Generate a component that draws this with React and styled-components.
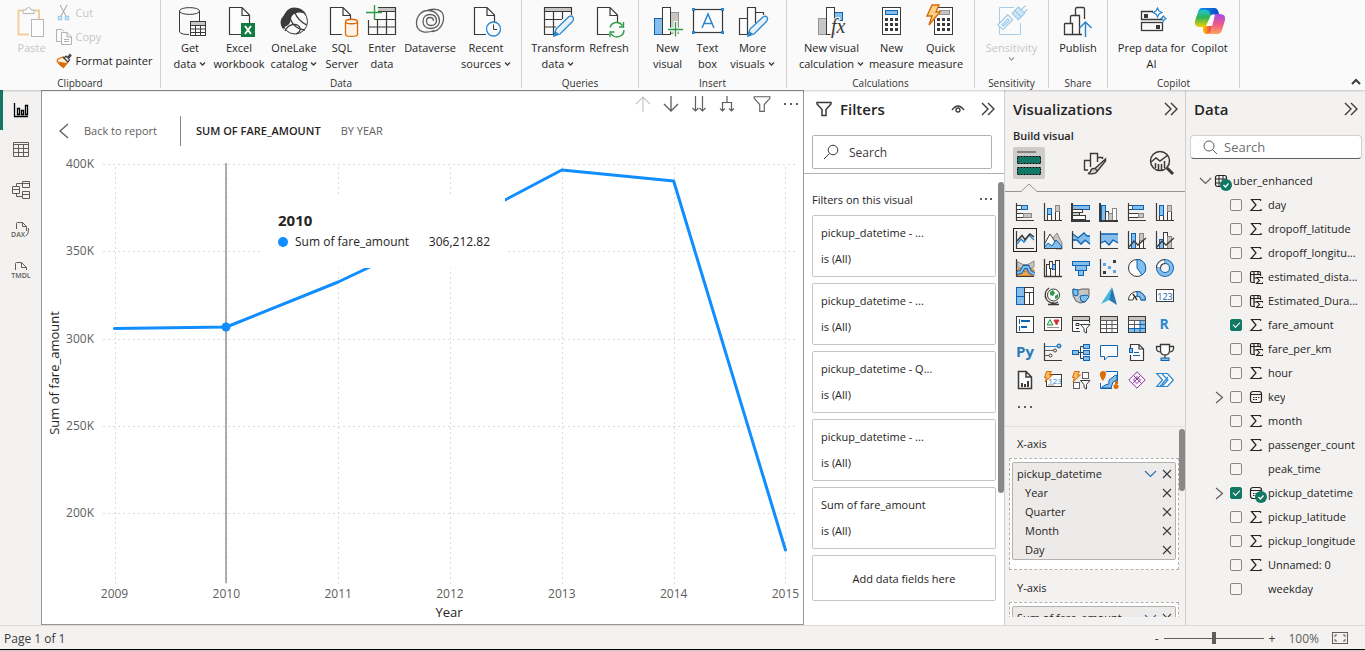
import React from "react";
import styled, { createGlobalStyle } from "styled-components";

const K = "#3b3a39";
const B = "#83beec";
const S = "#0f63b0";
const G = "#c8c6c4";
const W = "#fdfdfd";
const LIGHT = "#605e5c";
const GREEN = "#117865";
const ORANGE = "#d86c0a";

const Global = createGlobalStyle`
  *, *::before, *::after { box-sizing: border-box; }
  body { margin: 0; font-family: "Open Sans", "Noto Sans", sans-serif; font-size: 11px; color: #252423; background: #f3f2f1; }
  button, input { font: inherit; color: inherit; }
  button { background: none; border: 0; padding: 0; cursor: pointer; }
  h2, h3, p, ul { margin: 0; padding: 0; font: inherit; }
  ul { list-style: none; }
  svg { display: block; flex: none; overflow: visible; }
`;

const Shell = styled.div`
  display: flex;
  flex-direction: column;
  height: 100vh;
  min-height: 480px;
  overflow: hidden;
  padding-bottom: 1px;
  background: #cfc4c6;
`;

/* ---------- ribbon ---------- */
const Ribbon = styled.header`
  display: flex;
  flex: none;
  height: 90px;
  background: #fafafa;
  position: relative;
  z-index: 2;
  box-shadow: 0 1px 2px rgba(0, 0, 0, 0.2);
`;
const Group = styled.section`
  display: flex;
  flex-direction: column;
  flex: none;
  width: ${(p) => p.$w}px;
  margin-bottom: 2px;
  border-right: 1px solid #d2d0ce;
`;
const GroupBody = styled.div`
  display: flex;
  flex: 1;
  justify-content: center;
  padding-top: 5px;
`;
const GroupName = styled.h3`
  font-size: 10px;
  line-height: 15px;
  height: 12px;
  text-align: center;
  color: #323130;
`;
const BigButton = styled.button`
  display: flex;
  flex-direction: column;
  align-items: center;
  flex: none;
  width: ${(p) => p.$w}px;
  height: 70px;
  gap: 3px;
  line-height: 16px;
  white-space: nowrap;
  color: #252423;
  &:disabled { color: #c8c6c4; }
`;
const Lines = styled.span`
  display: flex;
  flex-direction: column;
  align-items: center;
`;
const Line = styled.span`
  display: flex;
  align-items: center;
  gap: 3px;
`;
const ClipStack = styled.div`
  display: flex;
  flex-direction: column;
  gap: 8px;
`;
const SmallButton = styled.button`
  display: flex;
  align-items: center;
  gap: 4px;
  height: 16px;
  line-height: 16px;
  white-space: nowrap;
  &:disabled { color: #c8c6c4; }
`;
const Collapse = styled.button`
  align-self: flex-end;
  margin: 0 4px 4px auto;
`;

/* ---------- body ---------- */
const Body = styled.div`
  display: grid;
  grid-template-columns: 41px minmax(0, 1fr) 201px 181px 179px;
  grid-template-rows: minmax(0, 1fr);
  flex: 1;
  min-height: 0;
`;
const Rail = styled.nav`
  display: flex;
  flex-direction: column;
  background: #f3f2f1;
`;
const RailButton = styled.button`
  display: flex;
  align-items: center;
  justify-content: center;
  height: 40px;
  border-left: 3px solid ${(p) => (p.$on ? GREEN : "transparent")};
  padding-right: 2px;
`;
const Canvas = styled.main`
  position: relative;
  display: flex;
  flex-direction: column;
  min-height: 0;
  background: #fff;
  border: 1px solid #979593;
`;
const ChartTools = styled.div`
  display: flex;
  align-items: center;
  justify-content: flex-end;
  flex: none;
  height: 26px;
  padding-right: 4px;
`;
const ToolButton = styled.button`
  display: flex;
  justify-content: center;
  width: ${(p) => p.$w || 28}px;
`;
const Crumbs = styled.div`
  display: flex;
  align-items: center;
  flex: none;
  height: 27px;
  margin-bottom: 8px;
  padding-left: 16px;
`;
const Back = styled.button`
  display: flex;
  align-items: center;
  gap: 15px;
  width: 122px;
  color: ${LIGHT};
`;
const Rule = styled.span`
  width: 1px;
  height: 30px;
  margin-right: 15px;
  background: #8a8886;
`;
const Crumb = styled.span`
  margin-right: 20px;
  font-weight: ${(p) => (p.$strong ? 600 : 400)};
  color: ${(p) => (p.$strong ? "#252423" : "#605e5c")};
`;
const Plot = styled.svg`
  flex: 1;
  width: 100%;
  min-height: 0;
  font-size: 12px;
`;
const Tip = styled.div`
  position: absolute;
  left: 220px;
  top: 104px;
  width: 243px;
  height: 73px;
  padding: 15px 15px 0 16px;
  background: #fff;
`;
const TipTitle = styled.p`
  font-size: 15px;
  font-weight: 700;
  line-height: 20px;
`;
const TipRow = styled.p`
  display: flex;
  align-items: center;
  gap: 7px;
  font-size: 12px;
  line-height: 24px;
  white-space: nowrap;
`;
const Dot = styled.i`
  width: 10px;
  height: 10px;
  border-radius: 50%;
  background: #118dff;
`;
const TipValue = styled.span`
  margin-left: auto;
`;

/* ---------- panes ---------- */
const Pane = styled.aside`
  position: relative;
  display: flex;
  flex-direction: column;
  min-width: 0;
  min-height: 0;
  overflow: hidden;
  background: ${(p) => p.$bg || "#f3f2f1"};
  border-right: 1px solid #d2d0ce;
  &:last-child { border-right: 0; }
`;
const PaneHead = styled.div`
  display: flex;
  align-items: center;
  flex: none;
  gap: 8px;
  height: 38px;
  padding: 0 ${(p) => p.$right || 8}px 0 ${(p) => p.$left}px;
`;
const PaneTitle = styled.h2`
  flex: 1;
  font-size: 15px;
  font-weight: 600;
`;
const PaneActions = styled.div`
  display: flex;
  align-items: center;
  gap: 16px;
`;
const SearchBox = styled.label`
  display: flex;
  align-items: center;
  flex: none;
  gap: ${(p) => (p.$round ? 6 : 10)}px;
  height: ${(p) => (p.$round ? 24 : 34)}px;
  margin: ${(p) => (p.$round ? "7px 3px 10px 4px" : "7px 12px 4px 8px")};
  padding-left: ${(p) => (p.$round ? 12 : 10)}px;
  background: #fff;
  border: 1px solid ${(p) => (p.$round ? "#d1d1d1" : "#b3b0ad")};
  border-bottom-color: ${(p) => (p.$round ? "#616161" : "#b3b0ad")};
  border-radius: ${(p) => (p.$round ? 4 : 2)}px;
`;
const SearchInput = styled.input`
  flex: 1;
  min-width: 0;
  border: 0;
  padding: 0;
  outline: 0;
  background: none;
  font-size: ${(p) => (p.$soft ? 13 : 12)}px;
  &::placeholder { color: ${(p) => (p.$soft ? "#707070" : "#3b3a39")}; opacity: 1; }
`;
const FilterScroll = styled.div`
  flex: 1;
  min-height: 0;
  overflow: hidden;
  padding: 14px 8px 0;
  border-top: 1px solid #b3b0ad;
`;
const SectionHead = styled.div`
  display: flex;
  justify-content: space-between;
  align-items: center;
  height: 22px;
  margin-bottom: 5px;
  padding-right: 3px;
`;
const Cards = styled.ul`
  display: flex;
  flex-direction: column;
  gap: 6px;
`;
const Card = styled.li`
  display: flex;
  flex-direction: column;
  height: 62px;
  padding: 4px 8px;
  line-height: 26px;
  white-space: nowrap;
  border: 1px solid #c8c6c4;
  border-radius: 2px;
`;
const AddCard = styled.button`
  width: 100%;
  height: 46px;
  margin-top: 6px;
  border: 1px solid #c8c6c4;
  border-radius: 2px;
`;
const Thumb = styled.span`
  position: absolute;
  right: 0;
  top: ${(p) => p.$top}px;
  width: 6px;
  height: ${(p) => p.$h}px;
  border-radius: 3px;
  background: #8a8886;
`;
const BuildLabel = styled.h3`
  flex: none;
  padding-left: 8px;
  line-height: 16px;
  font-weight: 600;
`;
const Tabs = styled.div`
  display: flex;
  justify-content: space-between;
  flex: none;
  height: 32px;
  margin-top: 3px;
  padding: 0 8px;
`;
const Tab = styled.button`
  display: grid;
  place-items: center;
  width: 32px;
  height: 32px;
  border-radius: 2px;
  background: ${(p) => (p.$on ? "#cfcdcb" : "none")};
`;
const TabLine = styled.svg`
  width: 100%;
  height: 14px;
`;
const Gallery = styled.div`
  display: grid;
  grid-template-columns: repeat(6, 28px);
  grid-auto-rows: 28px;
  flex: none;
  margin: 5px 0 0 6px;
`;
const VizButton = styled.button`
  display: grid;
  place-items: center;
  width: 24px;
  height: 24px;
  margin: 2px;
  border: 1px solid ${(p) => (p.$on ? "#252423" : "transparent")};
`;
const MoreViz = styled.button`
  align-self: flex-start;
  flex: none;
  height: 32px;
  padding: 0 0 6px 12px;
`;
const Wells = styled.div`
  flex: 1;
  min-height: 0;
  overflow: hidden;
  margin-bottom: 8px;
  padding: 7px 6px 0 4px;
  border-top: 1px solid #e1dfdd;
`;
const WellName = styled.h3`
  height: 24px;
  padding-left: 8px;
  line-height: 20px;
`;
const Well = styled.div`
  margin-bottom: 8px;
  padding: 3px 2px 9px;
  background: #fff;
  border: 1px dashed #b3b0ad;
`;
const WellBox = styled.div`
  padding: 1px 0 0;
  background: #edebe9;
  border: 1px solid #b3b0ad;
  border-radius: 2px;
`;
const WellRow = styled.div`
  display: flex;
  align-items: center;
  gap: 5px;
  height: 19px;
  padding: 0 3px 0 ${(p) => (p.$sub ? 12 : 4)}px;
`;
const WellText = styled.span`
  flex: 1;
  white-space: nowrap;
`;

/* ---------- field list ---------- */
const Fields = styled.ul`
  display: flex;
  flex-direction: column;
`;
const Field = styled.li`
  display: flex;
  align-items: center;
  height: 24px;
  padding-left: ${(p) => (p.$root ? 12 : 28)}px;
`;
const Twist = styled.button`
  display: flex;
  align-items: center;
  width: 16px;
  height: 16px;
  padding-left: 1px;
  visibility: ${(p) => (p.$shown ? "visible" : "hidden")};
`;
const FieldLabel = styled.label`
  display: flex;
  align-items: center;
  min-width: 0;
  flex: 1;
`;
const Check = styled.input`
  appearance: none;
  position: relative;
  flex: none;
  width: 12px;
  height: 12px;
  margin: 0 7px 0 0;
  border: 1px solid #8a8886;
  border-radius: 2px;
  background: #f6f5f4;
  &:checked { background: ${GREEN}; border-color: ${GREEN}; }
  &:checked::after {
    content: "";
    position: absolute;
    left: 2px;
    top: 2px;
    width: 7px;
    height: 4px;
    border: solid #fff;
    border-width: 0 0 1px 1px;
    transform: rotate(-45deg);
  }
`;
const FieldIcon = styled.span`
  position: relative;
  flex: none;
  width: 19px;
  height: 14px;
`;
const Badge = styled.svg`
  position: absolute;
  left: 6px;
  top: 5px;
`;
const FieldName = styled.span`
  overflow: hidden;
  text-overflow: ellipsis;
  white-space: nowrap;
  line-height: 18px;
`;

/* ---------- status ---------- */
const Status = styled.footer`
  display: flex;
  align-items: center;
  flex: none;
  height: 25px;
  padding: 1px 17px 0 4px;
  background: #f3f2f1;
  border-top: 1px solid #dddbd9;
  border-bottom: 1px solid #000;
  font-size: 12px;
  color: #3b3a39;
`;
const ZoomGroup = styled.div`
  display: flex;
  align-items: center;
  gap: 5px;
  margin-left: auto;
`;
const Range = styled.input`
  appearance: none;
  width: 100px;
  height: 12px;
  margin: 0;
  background: linear-gradient(#605e5c, #605e5c) center / 100% 1px no-repeat;
  &::-webkit-slider-thumb { appearance: none; width: 4px; height: 12px; background: #605e5c; }
`;
const Percent = styled.span`
  margin: 0 8px;
  color: ${LIGHT};
`;

/* ---------- drawings ---------- */
const Svg = ({ w = 32, h = w, vb, children, ...rest }) => (
  <svg width={w} height={h} viewBox={vb || `0 0 ${w} ${h}`} fill="none" aria-hidden="true" {...rest}>
    {children}
  </svg>
);
const P = ({ d, s = K, f = "none", w = 1, ...r }) => <path d={d} stroke={s} fill={f} strokeWidth={w} {...r} />;
const R = ({ a, f = "none", s = K, ...r }) => (
  <rect x={a[0]} y={a[1]} width={a[2]} height={a[3]} fill={f} stroke={s} {...r} />
);
const Page = ({ x = 6 }) => (
  <P w={1.200} f={W} d={`M${x + 12} 29.5H${x + .5}V2.5H${x + 13}L${x + 20.5} 10V18 M${x + 13} 2.5V10.5H${x + 20.5}`} />
);
const Caret = ({ c = K }) => <Svg w={7} h={6}><P d="M1 1.5L3.500 4L6 1.500" s={c} w={1.3} /></Svg>;
const CalcKeys = ({ x }) => (
  <g fill={K}>
    {[0, 1, 2].map((r) => [0, 1, 2].map((c) => <rect key={`${r}${c}`} x={x + c * 5} y={13 + r * 5} width="3" height="3" />))}
  </g>
);
const Bolt = ({ t }) => <path transform={t} d="M5 0H12L9 7H13L2 20L5 11H0Z" fill="#fcd089" stroke={ORANGE} strokeWidth="1.4" />;
const MiniBolt = () => <path d="M2.500 .5H7.500L5.500 4H8.500L1 11L2.500 6.500H.5Z" fill="#fbb95c" stroke={ORANGE} />;

const icons = {
  paste: (
    <Svg><P d="M7 5.5H2.500V29.500H13 M18 5.500H23V14" s="#f0cf9c" w={2} /><P d="M7 8.500V5H10Q10 2.500 12.500 2.500Q15 2.500 15 5H18V8.500Z" s="#b8b6b4" f={W} /><R a={[15.5, 14.5, 12, 17]} s="#b8b6b4" f={W} /></Svg>
  ),
  get: (
    <Svg><P d="M25.500 16V6C25.500 1.500 5.500 1.500 5.500 6V26C5.500 28.500 9 29.500 15 29.500 M5.500 6C5.500 10.500 25.500 10.500 25.500 6" /><R a={[16.5, 16.5, 15, 14]} f={W} /><rect x="17" y="17" width="14" height="3" fill={G} /><P d="M16.500 20.500H31.500 M16.500 24H31.500 M16.500 27.500H31.500 M21.500 20V31 M26.500 20V31" /></Svg>
  ),
  excel: (
    <Svg><Page x={6} /><rect x="18" y="18" width="14" height="14" fill="#107c41" /><P d="M22 21L28 29M28 21L22 29" s="#fff" w={1.900} /></Svg>
  ),
  lake: (
    <Svg><circle cx="17" cy="16.500" r="12.500" stroke={K} /><path d="M6 25C1 20 2 13 6 11C8 4 14 1 20 3C24 4 28 7 28.500 11C25 6 17 7 14 11C12 14 13 18 10 20C7 22 5 22 6 25Z" fill={K} /><P d="M12 10C12 18 18 24 27 25 M7 26C10 19 19 17 22 23C23 26 20 28 18 29 M17 8C19 13 23 17 28.500 20" w={1.300} /></Svg>
  ),
  sql: (
    <Svg><Page x={4} /><R a={[19, 15, 13, 17]} f="#fafafa" s="none" /><P d="M19.500 16.500V29.500C19.500 32 31.500 32 31.500 29.500V16.500C31.500 13.500 19.500 13.500 19.500 16.500C19.500 19.500 31.500 19.500 31.500 16.500" s={ORANGE} f="#fdf3e6" w={1.300} /></Svg>
  ),
  enter: (
    <Svg><rect x="12" y="3" width="17" height="3" fill={G} /><P d="M12 2.500H29.500V29.500H2.500V15 M12 6.500H29.500 M8 14.500H29.500 M2.500 22H29.500 M11.500 14V29.500 M20.500 6.500V29.500" w={1.200} /><P d="M8.500 0V15M0 7.500H16" s="#2e9b47" w={1.400} /></Svg>
  ),
  dataverse: (
    <Svg><P d="M20 25.500C12 29 3 27 2.500 19C2 12 7 5.500 14 5.500C21 5.500 25.500 10 25.500 16C25.500 20 22 23.500 17 23.500C12 23.500 9 20.500 9 16.500C9 12 12 9.500 16 9.500C20 9.500 22.500 12 22.500 16C22.500 18.500 20 20.500 17 20.500C14 20.500 12.500 18.500 12.500 16C12.500 14 14 12.500 16 12.500C18 12.500 19.500 14 19.500 16 M12 5.800C19 3 29 3.500 29.500 12C30 19 25 26.500 18 26.500" s="#605e5c" w={1.300} /></Svg>
  ),
  recent: (
    <Svg><Page x={4} /><circle cx="23.500" cy="24" r="7" stroke="#2a86cf" fill={W} strokeWidth="1.300" /><P d="M23.500 19.500V24.500H27" /></Svg>
  ),
  transform: (
    <Svg><rect x="3" y="3" width="26" height="3" fill={G} /><P d="M12 29.500H2.500V2.500H29.500V10 M2.500 6.500H29.500 M2.500 14.500H20 M2.500 22H14 M11.500 6.500V29.500 M20.500 6.500V14" w={1.200} /><P d="M12 31L14 24L27 11.500Q30 10 31.500 13Q32 15 30 17L18 29Z" s="#2a86cf" f="#e6f2fb" w={1.300} /><path d="M11 32L13 26L17 29Z" fill="#2a86cf" /></Svg>
  ),
  refresh: (
    <Svg><Page x={4} /><P d="M17 17H32V32H17Z" s="none" f="#fafafa" /><P d="M17 22.500A7 7 0 0 1 29.500 20.500M30.500 17V22H26 M31 25A7 7 0 0 1 18 28.500M17 32V27H21.500" s="#2e9b47" w={1.400} /></Svg>
  ),
  newVisual: (
    <Svg><R a={[2.5, 13.5, 8, 16]} f={B} s={S} /><R a={[18.5, 7.5, 8, 21]} f={G} s="#979593" /><R a={[10.5, 2.500, 8, 27]} f={W} /><P d="M23.500 16V32M15.500 24.500H31.500" s="#fafafa" w={4} /><P d="M23.500 17V31.500M16 24.500H31" s="#2e9b47" w={1.300} /></Svg>
  ),
  text: (
    <Svg><R a={[1.5, 4.5, 29, 23]} f={W} strokeWidth="1.200" /><g fill="#2a86cf"><rect y="3" width="3" height="3" /><rect x="29" y="3" width="3" height="3" /><rect y="26" width="3" height="3" /><rect x="29" y="26" width="3" height="3" /></g><P d="M10 23L16 9L22 23M12 18.500H20" s="#2a86cf" w={1.500} /></Svg>
  ),
  more: (
    <Svg><P d="M10.500 13.500H2.500V29.500H10.500M10.500 29.500V2.500H18.500V18 M18.500 7.500H26.500V10" w={1.200} f={W} /><P d="M11 31L13 24L26 12Q29 10 30.500 13Q31 15 29 17L17 29Z" s="#2a86cf" f="#e6f2fb" w={1.300} /><path d="M10 32L12 26L16 29Z" fill="#2a86cf" /></Svg>
  ),
  calc: (
    <Svg><R a={[2.500, 13.500, 8, 16]} f={G} s="#979593" /><R a={[18.500, 7.500, 8, 8]} f={B} s={S} /><R a={[10.500, 2.500, 8, 27]} f={W} /><text x="15" y="28" fontSize="20" fontStyle="italic" fontFamily="Liberation Serif, serif" fill={K} stroke="#fafafa" strokeWidth="2" paintOrder="stroke">fx</text></Svg>
  ),
  measure: (
    <Svg><R a={[6.500, 2.500, 18, 27]} f={W} /><R a={[9.500, 5.500, 12, 4]} f={B} s={S} /><CalcKeys x={9} /></Svg>
  ),
  quick: (
    <Svg><R a={[9.500, 2.500, 18, 27]} f={W} /><R a={[14.500, 5.500, 10, 4]} f={G} s="#979593" /><CalcKeys x={12} /><Bolt t="translate(2 0)" /></Svg>
  ),
  sensitivity: (
    <Svg><P d="M18 2.500H3.500V29.500H24.500V18" s="#a9cfe8" /><g transform="rotate(45 16 14)" stroke="#8fc4e6" fill="#f2f8fc"><rect x="10" y="14" width="7" height="14" /><rect x="13" y="17" width="2" height="8" /><rect x="12" y="1" width="9" height="9" fill="#cfe6f5" /><path d="M16 -5V1M20 -4V1M12 6H21" /></g></Svg>
  ),
  publish: (
    <Svg><P d="M3.500 18.500H10.500V29.500H2.500V19Q2.500 18.500 3.500 18.500M8.500 18V11.500Q8.500 10.500 10 10.500H17.500V29.500H10.500 M13.500 10V4Q13.500 2.500 15 2.500H21Q22.500 2.500 22.500 4V14 M17.500 29.500H20" w={1.300} /><P d="M23.500 32V17M17.500 23L23.500 17L29.500 23" s="#2a86cf" w={1.500} /></Svg>
  ),
  prep: (
    <Svg><P d="M17 6.500H5.500V14.500H27V11" w={1.300} /><R a={[5.500, 17.500, 21, 8]} strokeWidth="1.300" /><rect x="8" y="9" width="4" height="4" fill={K} /><rect x="20" y="20" width="4" height="4" fill={K} /><P d="M21.500 3L23 6L26 7.500L23 9L21.500 12L20 9L17 7.500L20 6Z M27.500 11L28.500 12.500L30 13.500L28.500 14.500L27.500 16L26.500 14.500L25 13.500L26.500 12.500Z" s="#2a86cf" w={1.200} f={W} /></Svg>
  ),
  copilot: (
    <Svg>
      <defs>
        <linearGradient id="cpA" x1="0" y1="0" x2="0" y2="1"><stop offset="0" stopColor="#1ec8f0" /><stop offset=".5" stopColor="#2fb457" /><stop offset="1" stopColor="#f7d000" /></linearGradient>
        <linearGradient id="cpB" x1="0" y1="0" x2="1" y2="0"><stop offset="0" stopColor="#1392e8" /><stop offset="1" stopColor="#0a49c9" /></linearGradient>
        <linearGradient id="cpC" x1="0" y1="0" x2="0" y2="1"><stop offset="0" stopColor="#a24bea" /><stop offset=".5" stopColor="#f0588a" /><stop offset="1" stopColor="#ffa35c" /></linearGradient>
        <linearGradient id="cpD" x1="0" y1="0" x2="1" y2="0"><stop offset="0" stopColor="#ffc400" /><stop offset="1" stopColor="#e8364f" /></linearGradient>
      </defs>
      <path d="M8 3H20Q23 3 24 6L25 9H20Q17 9 16 13L12 22H6Q0 22 1 16L4 7Q5 3 8 3Z" fill="url(#cpA)" />
      <path d="M8 3H20Q23 3 24 6L25 9H20Q18 9 17 11Q16 6 13 5Q9 4 5 6Q6 3 8 3Z" fill="url(#cpB)" />
      <path d="M9 22L13 21L18 21L17 26Q16 29 13 29Q10 29 9 26Z" fill="url(#cpD)" />
      <path d="M20 9H26Q32 9 31 15L28 25Q27 29 23 29H13Q16 29 17 25L20 14Q21 11 20 9Z" fill="url(#cpC)" />
      <path d="M17 10H21L16 21H12Z" fill="#fff" opacity=".9" />
    </Svg>
  ),
};

const axis = <P d="M.5 0V17.500H18" w={1.200} />;
const Calc123 = () => <text x="9" y="12.500" fontSize="9" textAnchor="middle" fill="#0f63b0">123</text>;
const viz = [
  ["Stacked bar chart", <>{axis}<R a={[.5, 2.500, 5, 4]} f={W} /><R a={[5.500, 2.500, 6, 4]} f={B} s={S} /><R a={[.5, 10.500, 7, 4]} f={W} /><R a={[7.500, 10.500, 8, 4]} f={G} s="#8a8886" /></>],
  ["Stacked column chart", <>{axis}<R a={[3.500, 11.500, 4, 6]} f={W} /><R a={[3.500, 5.500, 4, 6]} f={B} s={S} /><R a={[11.500, 8.500, 4, 9]} f={W} /><R a={[11.500, 2.500, 4, 6]} f={G} s="#8a8886" /></>],
  ["Clustered bar chart", <><R a={[.5, 2.500, 17, 4]} f={B} s={S} /><R a={[.5, 6.500, 10, 3]} f={W} /><R a={[.5, 9.500, 7, 3]} f={G} /><R a={[.5, 12.500, 13, 4]} f={W} /><P d="M0 0V18H18" s={K} w={2} /></>],
  ["Clustered column chart", <><R a={[1.500, 2.500, 4, 15]} f={B} s={S} /><R a={[5.500, 8.500, 3, 9]} f={W} /><R a={[8.500, 10.500, 4, 7]} f={G} s="#8a8886" /><R a={[12.500, 5.500, 4, 12]} f={W} s="#8a8886" /><P d="M0 0V18H18" s={K} w={2} /></>],
  ["100% stacked bar chart", <>{axis}<R a={[.5, 2.500, 4, 4]} f={W} /><R a={[4.500, 2.500, 11, 4]} f={B} s={S} /><R a={[.5, 10.500, 10, 4]} f={W} /><R a={[10.500, 10.500, 5, 4]} f={G} s="#8a8886" /></>],
  ["100% stacked column chart", <>{axis}<R a={[3.500, 12.500, 4, 5]} f={W} /><R a={[3.500, 2.500, 4, 10]} f={B} s={S} /><R a={[11.500, 8.500, 4, 9]} f={W} /><R a={[11.500, 2.500, 4, 6]} f={G} s="#8a8886" /></>],
  ["Line chart", <>{axis}<P d="M1 13L5 8L8 11L13 4L18 9" s="#2a86cf" w={1.500} /><P d="M1 10L6 4.500L9 8.500L14 3L18 6" w={1.500} /></>],
  ["Area chart", <><path d="M8 8L13 2L18 12V18H12Z" fill={G} stroke="#8a8886" /><P d="M.5 13L6 3L12 12" f={W} /><path d="M.5 16L4 12L8 15L12 9L17.500 15V17.500H.5Z" fill={B} stroke={S} />{axis}</>],
  ["Stacked area chart", <><path d="M1 3L6 7L12 2L15 5H18V14L14 10L9 14L4 9L1 11Z" fill={B} /><P d="M1 3L6 7L12 2L15 5H18M1 9L5 9L9 13L13 9L18 13" s={S} w={1.300} />{axis}</>],
  ["100% stacked area chart", <><path d="M1 3H18V12L13 9L9 14L5 10L1 12Z" fill={B} /><P d="M1 3H18M1 12L5 10L9 14L13 9L18 12" s={S} w={1.300} />{axis}</>],
  ["Line and stacked column chart", <><R a={[3.500, 2.500, 4, 15]} f={B} s={S} /><R a={[11.500, 9.500, 4, 8]} f={W} /><R a={[11.500, 2.500, 4, 7]} f={G} s="#8a8886" /><P d="M1 16L6 10L10 14L18 7" w={1.300} />{axis}</>],
  ["Line and clustered column chart", <><R a={[3.500, 8.500, 4, 9]} f={B} s={S} /><R a={[7.500, 1.500, 4, 16]} f={W} /><R a={[11.500, 5.500, 4, 12]} f={G} s="#8a8886" /><P d="M1 16L6 10L10 14L18 7" w={1.300} />{axis}</>],
  ["Ribbon chart", <><path d="M1 2.500L7 5.500H12L18 2V8L12 11H7L1 8Z" fill={G} stroke="#8a8886" /><path d="M1 11L4 9L9 13L14 9L18 11V17H1Z" fill="#f2a54f" stroke={ORANGE} /><P d="M1 14L5 13L8 8L12 8L14 13L18 15" s={S} w={4} /><P d="M1 14L5 13L8 8L12 8L14 13L18 15" s={B} w={2} />{axis}</>],
  ["Waterfall chart", <><R a={[2.500, 5.500, 4, 12]} f={W} /><R a={[5.500, 2.500, 3, 7]} f={W} /><R a={[8.500, 5.500, 3, 5]} f={B} s={S} /><R a={[11.500, 1.500, 4, 16]} f={W} /><P d="M.5 0V17.500H18" w={1.300} /></>],
  ["Funnel", <><R a={[.5, 2.500, 17, 4]} f={B} s={S} /><R a={[3.500, 6.500, 11, 5]} f={B} s={S} /><R a={[6.500, 11.500, 5, 5]} f={B} s={S} /></>],
  ["Scatter chart", <>{axis}<g fill={K}><rect x="13" y="1" width="3" height="3" /><rect x="3" y="12" width="3" height="3" /></g><g fill="#5ba7e5"><rect x="3" y="4" width="3" height="3" /><rect x="8" y="7" width="3" height="3" /><rect x="13" y="11" width="3" height="3" /></g></>],
  ["Pie chart", <><circle cx="9" cy="9" r="8.500" stroke={K} fill={W} /><path d="M9 .5A8.500 8.500 0 0 1 14 16L9 9Z" fill={B} stroke={S} /></>],
  ["Donut chart", <><circle cx="9" cy="9" r="6.500" stroke={S} strokeWidth="5" /><circle cx="9" cy="9" r="6.500" stroke={B} strokeWidth="3" /><P d="M2.500 9A6.500 6.500 0 0 1 9 2.500" s={K} w={5} /><P d="M2.500 8.500A6.500 6.500 0 0 1 8.500 2.500" s={W} w={3} /></>],
  ["Treemap", <><R a={[.5, .5, 8, 17]} f={B} s={S} /><P d="M.5 9.500H8.500" s={S} /><R a={[8.500, .5, 9, 5]} f={W} /><R a={[8.500, 5.500, 5, 12]} f={W} /><R a={[13.500, 5.500, 4, 12]} f={W} /></>],
  ["Map", <><circle cx="9.500" cy="8" r="6" fill={W} stroke={K} /><path d="M6 5L9 3L11 6L9 9L6 8ZM11 9L14 7V11L11 12Z" fill="#2e9b47" /><P d="M5 1A8 8 0 0 0 14 15M9 15V17.500M4 17.500H15" w={1.300} /></>],
  ["Filled map", <><path d="M1 2L6 3L10 2L17 2L17 9L13 15L8 16L4 14L1 9Z" fill={G} stroke="#605e5c" /><path d="M1 2L6 3V8L3 9L1 6ZM8 9L15 8L17 10L13 15L9 14Z" fill={B} stroke={S} /></>],
  ["Azure map", <><path d="M12 0L1 17L9 13Z" fill="#43b5dd" /><path d="M12 0L9 13L17 18Z" fill="#2479b5" /></>],
  ["Gauge", <><path d="M.5 13A8.500 8.500 0 0 1 17.500 13H13A4 4 0 0 0 5 13Z" fill={W} stroke={K} /><path d="M9 4.500A8.500 8.500 0 0 1 17.500 13H13A4 4 0 0 0 9 9Z" fill={B} stroke={S} /><P d="M9 13L5 7" w={1.500} /></>],
  ["Card", <><R a={[.5, 2.500, 17, 12]} f={W} /><Calc123 /></>],
  ["Multi-row card", <><R a={[.5, 1.500, 17, 16]} f={W} /><P d="M3.500 4V9M3.500 11V16" s={S} /><P d="M5 6H14M5 12H11" s={S} w={2} /></>],
  ["KPI", <><R a={[.5, 2.500, 17, 13]} f={W} /><path d="M3 10L6 4.500L9 10Z" stroke="#2e9b47" fill="#c9e8cf" /><path d="M10 5H15L12.500 10Z" fill="#d13438" stroke="#d13438" /><P d="M3 12.500H15" s="#979593" /></>],
  ["Slicer", <><P d="M17.500 8V1.500H.5V16.500H8" f={W} /><rect x="1" y="2" width="16" height="3" fill={G} /><P d="M.5 5.500H17.500M4 8.500H7V10.500H4ZM4 13.500H7" /><P d="M8.500 9.500H18L14.500 13.500V18L12 16.500V13.500Z" f={W} /></>],
  ["Table", <><R a={[.5, 1.500, 17, 16]} f={W} /><rect x="1" y="2" width="16" height="3" fill={G} /><P d="M.5 5.500H17.500M.5 9.500H17.500M.5 13.500H17.500M6.500 5V17M12 5V17" s="#605e5c" /></>],
  ["Matrix", <><R a={[.5, 1.500, 17, 16]} f={W} /><rect x="1" y="2" width="16" height="3" fill={G} /><rect x="1" y="13" width="16" height="4" fill={B} /><rect x="12" y="5" width="5" height="12" fill={B} /><P d="M.5 5.500H17.500M.5 9.500H12M6.500 5V13" s="#605e5c" /><P d="M12 5V17M1 13.500H17M6.500 13V17M12 9.500H17" s={S} /></>],
  ["R script visual", <text x="8" y="14" fontSize="14" fontWeight="700" textAnchor="middle" fill="#2a86cf">R</text>],
  ["Python visual", <text x="9" y="14" fontSize="15" fontWeight="700" textAnchor="middle" fill="#2a7ab8">Py</text>],
  ["Key influencers", <>{axis}<P d="M1 3.500H13" s="#2a86cf" /><circle cx="15" cy="3" r="2" fill={B} stroke={S} /><P d="M1 7.500H10M1 12.500H6" s="#605e5c" /><circle cx="11" cy="7.500" r="1.500" fill={W} stroke={K} /><circle cx="6.500" cy="12.500" r="1.500" fill={W} stroke={K} /></>],
  ["Decomposition tree", <><P d="M6 9.500H11M8.500 3.500H11M8.500 3.500V15.500H11" /><R a={[.5, 7.500, 6, 4]} f={B} s={S} /><R a={[11.500, 1.500, 6, 4]} f={B} s={S} /><R a={[11.500, 7.500, 6, 4]} f={B} s={S} /><R a={[11.500, 13.500, 6, 4]} f={B} s={S} /></>],
  ["Q&A", <P d="M.5 2.500H17.500V13.500H8L4.500 17V13.500H.5Z" s={S} f={W} />],
  ["Narrative", <><P d="M2.500 12V17.500H15.500V6L11 1.500H2.500V5M11 1.500V6H15.500" f={W} w={1.200} /><R a={[1.500, 5.500, 3, 4]} f={B} s={S} /><P d="M6 9.500H11M5 12.500H12" s={S} /></>],
  ["Goals", <><P d="M4.500 1.500H13.500V8Q13 12 9 12Q5 12 4.500 8ZM4.500 3.500H.5V6Q1 9 5 9M13.500 3.500H17.500V6Q17 9 13 9M9 12V15" f={W} w={1.300} /><R a={[5, 15, 8, 2.500]} f={B} s={S} /></>],
  ["Paginated report", <><P d="M2.500 .5H10L15.500 6V17.500H2.500ZM10 .5V6H15.500" f={W} w={1.500} /><g fill={K}><rect x="5" y="12" width="2" height="4" /><rect x="8" y="13" width="2" height="3" /><rect x="11" y="10" width="2" height="6" /></g></>],
  ["Card (new)", <><R a={[2.500, 3.500, 15, 12]} f={W} /><text x="11" y="12.500" fontSize="8" textAnchor="middle" fill="#2a86cf">123</text><P d="M4 14H10" s="#979593" /><MiniBolt /></>],
  ["Slicer (new)", <><R a={[10.500, 1.500, 6, 6]} f={W} s="#605e5c" /><R a={[1.500, 11.500, 6, 6]} f={W} s="#605e5c" /><P d="M8.500 9.500H18L14.500 13.500V18L12 16.500V13.500Z" f={W} /><MiniBolt /></>],
  ["ArcGIS map", <><P d="M6 .5H17.500V10M.5 12V17.500H12" s={S} f={W} /><path d="M2 16Q6 13 9 13Q8 8 12 7Q14 4 17 4V9L13 11L11 17H2Z" fill={B} stroke={S} /><path d="M3 10Q-1 5 0 2Q1 0 3 0Q6 0 6 3Q6 6 3 10Z" fill={ORANGE} /><circle cx="16" cy="15.500" r="2.500" fill={ORANGE} /><rect x="15" y="10" width="3" height="3" fill={ORANGE} /></>],
  ["Power Apps", <g stroke="#8a3a9c"><path d="M9 .8L17.200 9L9 17.200L.8 9Z" fill="#fbf4fc" /><path d="M5.500 4.500L13.500 12.500M12.500 4.500L4.500 12.500M9 5.500L12.500 9L9 12.500L5.500 9Z" /></g>],
  ["Power Automate", <g stroke="#2a86cf" strokeWidth="1.200" fill={W}><path d="M.8 2.500H11.500L17.300 9L11.500 15.500H.8L6.500 9ZM6 3L12 9L6 15.500M4 15.500L12 6" /></g>],
];

const XMark = () => <Svg w={10}><P d="M1 1L9 9M9 1L1 9" w={1.100} /></Svg>;
const Down = ({ s = "#2a6fb0" }) => <Svg w={13} h={8}><P d="M1 1L6.500 6.500L12 1" s={s} w={1.200} /></Svg>;
const Chevrons = () => <Svg w={14}><P d="M1 1L7 7L1 13M7 1L13 7L7 13" w={1.400} /></Svg>;
const Dots = ({ c = LIGHT, g = 5 }) => (
  <Svg w={g * 2 + 4} h={4}><g fill={c}>{[0, 1, 2].map((i) => <rect key={i} x={1 + i * g} y="1" width="2" height="2" />)}</g></Svg>
);
const Funnel = ({ s = K, w = 1, size = 16 }) => (
  <Svg w={size} vb="0 0 16 16"><P d="M1 1.500H15V3L10 8.500V14.500H6V8.500L1 3Z" s={s} w={w} /></Svg>
);

const glyphs = {
  sigma: <Svg w={14}><P d="M11.500 3V1.500H2.500L7 7L2 12.500H12V11" s="#252423" w={1.200} /></Svg>,
  calc: (
    <Svg w={14}><P d="M6 12.500H3Q1.500 12.500 1.500 11V3Q1.500 1.500 3 1.500H10Q11.500 1.500 11.500 3V6M1.500 4.500H11M5 1.500V12.500M5 8H8M9 1.500V5" s="#252423" w={1.200} /><P d="M13.500 8.500V7.500H8L10.500 10.500L7.500 13.500H13.500V12.500" s="#252423" w={1.100} /></Svg>
  ),
  date: (
    <Svg w={14}><R a={[1.500, 1.500, 11, 11]} rx="2.500" s="#252423" strokeWidth="1.200" /><P d="M1.500 4.500H12.500" s="#252423" /><P d="M4 7.500H10.500M4 9.500H9" s="#252423" strokeDasharray="1.500 1" /></Svg>
  ),
  none: null,
};
const OkBadge = () => (
  <Badge width="12" height="12" viewBox="0 0 12 12" fill="none"><circle cx="6" cy="6" r="6" fill={GREEN} /><path d="M3.500 6L5.500 8L8.500 4.500" stroke="#fff" strokeWidth="1.300" /></Badge>
);

const ribbon = [
  { name: "Data", w: 361, items: [["Get", "data", "get", 46, 1], ["Excel", "workbook", "excel", 52], ["OneLake", "catalog", "lake", 58, 1], ["SQL", "Server", "sql", 38], ["Enter", "data", "enter", 42], ["Dataverse", "", "dataverse", 54], ["Recent", "sources", "recent", 58, 1]] },
  { name: "Queries", w: 117, items: [["Transform", "data", "transform", 58, 1], ["Refresh", "", "refresh", 44]] },
  { name: "Insert", w: 148, items: [["New", "visual", "newVisual", 42], ["Text", "box", "text", 38], ["More", "visuals", "more", 52, 1]] },
  { name: "Calculations", w: 188, items: [["New visual", "calculation", "calc", 70, 1], ["New", "measure", "measure", 50], ["Quick", "measure", "quick", 48]] },
  { name: "Sensitivity", w: 74, items: [["Sensitivity", " ", "sensitivity", 64, 1, true]] },
  { name: "Share", w: 59, items: [["Publish", "", "publish", 48]] },
  { name: "Copilot", w: 132, items: [["Prep data for", "AI", "prep", 72], ["Copilot", "", "copilot", 44]] },
];

const rail = [
  ["Report view", <Svg w={16}><P d="M1.500 1V14.500H15M4.500 6.500H6.500V12.500H4.500ZM8.500 8.500H10.500V12.500H8.500ZM12.500 3.500H14.500V12.500H12.500Z" s="#000" w={1.300} /></Svg>],
  ["Table view", <Svg w={18}><P d="M1.500 1.500H16.500V15.500H1.500ZM1.500 3.500H16.500M1.500 7.500H16.500M1.500 11.500H16.500M6.500 3.500V15.500M11.500 3.500V15.500" s={LIGHT} /></Svg>],
  ["Model view", <Svg w={20}><P d="M1.500 6.500H8.500V13.500H1.500ZM1.500 9.500H8.500M11.500 1.500H18.500V7.500H11.500ZM11.500 3.500H18.500M11.500 11.500H18.500V18.500H11.500ZM11.500 14.500H18.500M5.500 6V3.500H11M5.500 14V16.500H11" s={LIGHT} /></Svg>],
  ["DAX query view", <Svg w={20}><P d="M5.500 9V3.500Q5.500 2.500 6.500 2.500H11.500L15.500 6.500V11M11.500 2.500V6.500H15.500M17.500 8Q18 14 15 16" s={LIGHT} /><text x="0" y="17" fontSize="7" fontWeight="600" fill={LIGHT}>DAX</text></Svg>],
  ["TMDL view", <Svg w={20}><P d="M4.500 10V3.500Q4.500 2.500 5.500 2.500H10.500L15.500 7.500V10M10.500 2.500V7.500H15.500" s={LIGHT} /><text x="10" y="18" fontSize="7" fontWeight="600" textAnchor="middle" fill={LIGHT}>TMDL</text></Svg>],
];

const fields = [
  ["day", "sigma"], ["dropoff_latitude", "sigma"], ["dropoff_longitu...", "sigma"], ["estimated_dista...", "calc"], ["Estimated_Dura...", "calc"],
  ["fare_amount", "sigma", true], ["fare_per_km", "calc"], ["hour", "sigma"], ["key", "date", false, true], ["month", "sigma"],
  ["passenger_count", "sigma"], ["peak_time", "none"], ["pickup_datetime", "date", true, true, true], ["pickup_latitude", "sigma"],
  ["pickup_longitude", "sigma"], ["Unnamed: 0", "sigma"], ["weekday", "none"],
];

const years = [2009, 2010, 2011, 2012, 2013, 2014, 2015];
const xAt = (i) => 72.500 + i * 111.830;
const levels = [["400K", 12], ["350K", 99], ["300K", 187], ["250K", 274], ["200K", 361]];
const series = [176.500, 175, 130, 77, 18, 29, 398];

function Chart() {
  return (
    <Plot viewBox="0 0 761 472" role="img" aria-label="Sum of fare_amount by Year">
      <g stroke="#dddbd9" strokeDasharray="2 3">
        {levels.map(([t, y]) => <line key={t} x1="61" x2="754" y1={y + .5} y2={y + .5} />)}
        {years.map((y, i) => <line key={y} x1={Math.round(xAt(i)) + .5} x2={Math.round(xAt(i)) + .5} y1="15" y2="432" />)}
      </g>
      <g fill={LIGHT}>
        {levels.map(([t, y]) => <text key={t} x="52" y={y + 4} textAnchor="end">{t}</text>)}
        {years.map((y, i) => <text key={y} x={xAt(i)} y="446" textAnchor="middle">{y}</text>)}
      </g>
      <g fill="#252423" fontSize="13" fontWeight="500">
        <text x="407" y="465" textAnchor="middle">Year</text>
        <text transform="translate(17 221) rotate(-90)" textAnchor="middle">Sum of fare_amount</text>
      </g>
      <line x1="184" x2="184" y1="11" y2="431" stroke="#605e5c" />
      <polyline points={series.map((v, i) => `${xAt(i)},${v}`).join(" ")} fill="none" stroke="#118dff" strokeWidth="3" strokeLinejoin="round" strokeLinecap="round" />
      <circle cx="184" cy="175" r="4.500" fill="#118dff" />
    </Plot>
  );
}

export default function App() {
  return (
    <>
      <Global />
      <Shell>
        <Ribbon>
          <Group $w={161}>
            <GroupBody>
              <BigButton $w={48} disabled>{icons.paste}Paste</BigButton>
              <ClipStack>
                <SmallButton disabled><Svg w={16}><P d="M4 0L10 11M11 0L5 11" s="#a19f9d" /><P d="M2.500 11.500H5.500V14.500H2.500ZM9.500 11.500H12.500V14.500H9.500Z" s="#9fcdee" w={1.500} /></Svg>Cut</SmallButton>
                <SmallButton disabled><Svg w={16}><P d="M5 12.500H.5V.5H6L8 2.500M5.500 3.500H11L15.500 8V15.500H5.500ZM11 3.500V8H15.500M8 10.500H13M8 12.500H13" s="#b3b0ad" /></Svg>Copy</SmallButton>
                <SmallButton><Svg w={16}><P d="M2 6L7 4L12 9L7.500 14.500Q3 12 1 8Z" f="#fdf0df" s={ORANGE} w={1.200} /><path d="M2 8.500L11 10L7.500 15Q4 13 2 8.500Z" fill={ORANGE} /><P d="M7 4L12 9M8 5L10 3L11.500 4.500L14 1.500L15 2.500L12.500 5.500L13.500 7L12 9" w={1.200} f={W} /></Svg>Format painter</SmallButton>
              </ClipStack>
            </GroupBody>
            <GroupName>Clipboard</GroupName>
          </Group>
          {ribbon.map((g) => (
            <Group key={g.name} $w={g.w}>
              <GroupBody>
                {g.items.map(([a, b, icon, w, caret, off]) => (
                  <BigButton key={a + b} $w={w} disabled={off}>
                    {icons[icon]}
                    <Lines>
                      <Line>{a}</Line>
                      {b && <Line>{b.trim()}{caret ? <Caret c={off ? "#a19f9d" : K} /> : null}</Line>}
                    </Lines>
                  </BigButton>
                ))}
              </GroupBody>
              <GroupName>{g.name}</GroupName>
            </Group>
          ))}
          <Collapse aria-label="Collapse ribbon"><Svg w={10} h={8}><P d="M1 6L5 2L9 6" w={2} /></Svg></Collapse>
        </Ribbon>

        <Body>
          <Rail>
            {rail.map(([n, icon], i) => <RailButton key={n} aria-label={n} $on={i === 0}>{icon}</RailButton>)}
          </Rail>

          <Canvas>
            <ChartTools>
              <ToolButton aria-label="Drill up"><Svg w={16}><P d="M8 16V1M1 8L8 1L15 8" s="#c8c6c4" w={1.200} /></Svg></ToolButton>
              <ToolButton aria-label="Drill down"><Svg w={16}><P d="M8 0V15M1 8L8 15L15 8" s={LIGHT} w={1.300} /></Svg></ToolButton>
              <ToolButton aria-label="Next level"><Svg w={16}><P d="M4.500 0V15M1.500 12L4.500 15L7.500 12M11.500 0V15M8.500 12L11.500 15L14.500 12" s={LIGHT} w={1.200} /></Svg></ToolButton>
              <ToolButton aria-label="Expand all"><Svg w={16}><P d="M8 0V6.500M3.500 15V6.500H12.500V15M1 12.500L3.500 15L6 12.500M10 12.500L12.500 15L15 12.500" s={LIGHT} w={1.200} /></Svg></ToolButton>
              <ToolButton $w={42} aria-label="Filters"><Funnel s={LIGHT} size={18} /></ToolButton>
              <ToolButton $w={16} aria-label="More options"><Dots g={6} /></ToolButton>
            </ChartTools>
            <Crumbs>
              <Back><Svg w={11} h={16}><P d="M10 1L2 8L10 15" s={LIGHT} w={1.300} /></Svg>Back to report</Back>
              <Rule />
              <Crumb $strong>SUM OF FARE_AMOUNT</Crumb>
              <Crumb>BY YEAR</Crumb>
            </Crumbs>
            <Chart />
            <Tip role="tooltip">
              <TipTitle>2010</TipTitle>
              <TipRow><Dot />Sum of fare_amount<TipValue>306,212.82</TipValue></TipRow>
            </Tip>
          </Canvas>

          <Pane $bg="#fff">
            <PaneHead $left={12} $right={9}>
              <Funnel w={1.500} />
              <PaneTitle>Filters</PaneTitle>
              <PaneActions>
                <Svg w={14} h={10}><P d="M1 6Q7 -2 13 6" w={1.400} /><circle cx="7" cy="6" r="2" stroke={K} strokeWidth="1.300" /></Svg>
                <ToolButton $w={14} aria-label="Collapse filters"><Chevrons /></ToolButton>
              </PaneActions>
            </PaneHead>
            <SearchBox>
              <Svg w={16}><circle cx="10" cy="6" r="4.800" stroke={K} /><P d="M6.500 9.500L1 15" /></Svg>
              <SearchInput placeholder="Search" aria-label="Search filters" />
            </SearchBox>
            <FilterScroll>
              <SectionHead><h3>Filters on this visual</h3><Dots /></SectionHead>
              <Cards>
                {["pickup_datetime - ...", "pickup_datetime - ...", "pickup_datetime - Q...", "pickup_datetime - ...", "Sum of fare_amount"].map((t, i) => (
                  <Card key={i}><span>{t}</span><span>is (All)</span></Card>
                ))}
              </Cards>
              <AddCard>Add data fields here</AddCard>
            </FilterScroll>
            <Thumb $top={92} $h={311} />
          </Pane>

          <Pane>
            <PaneHead $left={8} $right={7}><PaneTitle>Visualizations</PaneTitle><ToolButton $w={14} aria-label="Collapse visualizations"><Chevrons /></ToolButton></PaneHead>
            <BuildLabel>Build visual</BuildLabel>
            <Tabs>
              <Tab $on aria-label="Build visual">
                <Svg w={26}><P d="M1 2H20" /><rect x="1.500" y="6.500" width="23" height="7" fill={GREEN} stroke="#000" strokeDasharray="2 1" /><rect x="1.500" y="17.500" width="23" height="7" fill={GREEN} stroke="#000" strokeDasharray="2 1" /></Svg>
              </Tab>
              <Tab aria-label="Format visual">
                <Svg w={24}><P d="M5 19H1.500V9.500H8M7.500 16V2.500H14.500V11M14.500 6.500H19.500V8" w={1.400} /><P d="M22.500 8L12 17.500L14.500 20L22.500 10ZM12 17.500Q8 17 7.500 20.500Q7 22 5 22.500Q12 24 14.500 20" f="#d2d0ce" w={1.400} /></Svg>
              </Tab>
              <Tab aria-label="Analytics">
                <Svg w={26}><circle cx="12" cy="11" r="9.500" stroke={K} strokeWidth="1.500" /><P d="M3 12L8 8L12 11L20 5M7.500 13V18M10.500 14V20M13.500 14V20M16.500 11V18" w={1.500} /><P d="M19 18L25 24" w={3} /></Svg>
              </Tab>
            </Tabs>
            <TabLine viewBox="0 0 180 14" preserveAspectRatio="none" fill="none"><P d="M0 12.500H16L24 5L32 12.500H180" s="#979593" /></TabLine>
            <Gallery>
              {viz.map(([n, d], i) => <VizButton key={n} aria-label={n} $on={i === 6}><Svg w={18}>{d}</Svg></VizButton>)}
            </Gallery>
            <MoreViz aria-label="More visuals"><Dots g={6} /></MoreViz>
            <Wells>
              <WellName>X-axis</WellName>
              <Well>
                <WellBox>
                  <WellRow><WellText>pickup_datetime</WellText><Down /><XMark /></WellRow>
                  {["Year", "Quarter", "Month", "Day"].map((t) => <WellRow key={t} $sub><WellText>{t}</WellText><XMark /></WellRow>)}
                </WellBox>
              </Well>
              <WellName>Y-axis</WellName>
              <Well><WellBox><WellRow><WellText>Sum of fare_amount</WellText><Down /><XMark /></WellRow></WellBox></Well>
            </Wells>
            <Thumb $top={339} $h={62} />
          </Pane>

          <Pane>
            <PaneHead $left={8} $right={7}><PaneTitle>Data</PaneTitle><ToolButton $w={14} aria-label="Collapse data"><Chevrons /></ToolButton></PaneHead>
            <SearchBox $round>
              <Svg w={15}><circle cx="6" cy="6" r="5" stroke={LIGHT} /><P d="M9.500 9.500L14 14" s={LIGHT} /></Svg>
              <SearchInput $soft placeholder="Search" aria-label="Search fields" />
            </SearchBox>
            <Fields>
              <Field $root>
                <Twist $shown aria-label="Collapse table"><Down s={LIGHT} /></Twist>
                <FieldIcon><Svg w={14}><R a={[1.500, 1.500, 11, 11]} rx="2" s="#252423" strokeWidth="1.200" /><P d="M1.500 5H12.500M1.500 9H12.500M5 1.500V12.500M9 1.500V12.500" s="#252423" /></Svg><OkBadge /></FieldIcon>
                <FieldName>uber_enhanced</FieldName>
              </Field>
              {fields.map(([n, g, on, tree, badge]) => (
                <Field key={n}>
                  <Twist $shown={tree} aria-label={`Expand ${n}`}><Svg w={9} h={13}><P d="M1 1L7.500 6.500L1 12" s={LIGHT} w={1.200} /></Svg></Twist>
                  <FieldLabel>
                    <Check type="checkbox" defaultChecked={!!on} />
                    <FieldIcon>{glyphs[g]}{badge && <OkBadge />}</FieldIcon>
                    <FieldName>{n}</FieldName>
                  </FieldLabel>
                </Field>
              ))}
            </Fields>
          </Pane>
        </Body>

        <Status>
          <span>Page 1 of 1</span>
          <ZoomGroup>
            <button aria-label="Zoom out">-</button>
            <Range type="range" min="0" max="100" defaultValue="50" aria-label="Zoom" />
            <button aria-label="Zoom in">+</button>
            <Percent>100%</Percent>
            <Svg w={16} h={12}><R a={[.5, .5, 15, 11]} s={LIGHT} /><P d="M3 5V3H5M11 3H13V5M13 7V9H11M5 9H3V7" s={LIGHT} /></Svg>
          </ZoomGroup>
        </Status>
      </Shell>
    </>
  );
}
